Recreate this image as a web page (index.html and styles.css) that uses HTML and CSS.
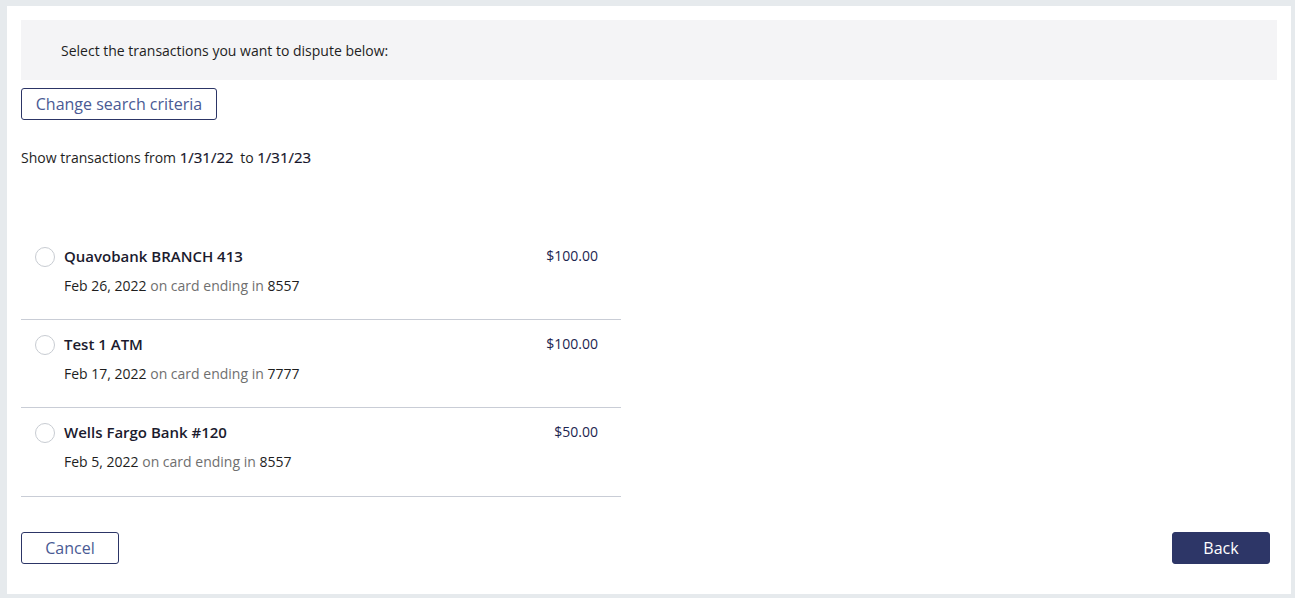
FILE: index.html
```html
<!DOCTYPE html>
<html>
<head>
<meta charset="utf-8">
<link rel="stylesheet" href="styles.css">
</head>
<body>
<div class="card">
  <div class="banner">Select the transactions you want to dispute below:</div>
  <button class="btn btn-outline btn-criteria">Change search criteria</button>
  <p class="range">Show transactions from <span class="date">1/31/22</span> to <span class="date">1/31/23</span></p>
  <ul class="txlist">
    <li class="tx">
      <span class="radio"></span>
      <div class="txbody">
        <div class="txname">Quavobank BRANCH 413</div>
        <div class="txmeta">Feb 26, 2022 <span class="muted">on card ending in</span> 8557</div>
      </div>
      <div class="amount">$100.00</div>
    </li>
    <li class="tx">
      <span class="radio"></span>
      <div class="txbody">
        <div class="txname">Test 1 ATM</div>
        <div class="txmeta">Feb 17, 2022 <span class="muted">on card ending in</span> 7777</div>
      </div>
      <div class="amount">$100.00</div>
    </li>
    <li class="tx">
      <span class="radio"></span>
      <div class="txbody">
        <div class="txname">Wells Fargo Bank #120</div>
        <div class="txmeta">Feb 5, 2022 <span class="muted">on card ending in</span> 8557</div>
      </div>
      <div class="amount">$50.00</div>
    </li>
  </ul>
  <div class="footer">
    <button class="btn btn-outline btn-small">Cancel</button>
    <button class="btn btn-primary btn-small">Back</button>
  </div>
</div>
</body>
</html>
```

FILE: styles.css
```css
html, body {
  margin: 0;
  padding: 0;
  background: #e6eaed;
  font-family: "Open Sans", "Liberation Sans", sans-serif;
  color: #1e1e1e;
}

.card {
  background: #ffffff;
  margin: 6px 4px 4px 7px;
  padding: 14px 14px 30px 14px;
  display: flex;
  flex-direction: column;
  align-items: flex-start;
}

.banner {
  align-self: stretch;
  background: #f4f4f6;
  height: 60px;
  padding-left: 40px;
  display: flex;
  align-items: center;
  font-size: 14px;
  color: #1e1e1e;
  box-sizing: border-box;
}

.btn {
  font-family: "Open Sans", "Liberation Sans", sans-serif;
  border-radius: 3px;
  height: 32px;
  box-sizing: border-box;
  cursor: pointer;
  padding: 0;
}

.btn-outline {
  background: #ffffff;
  border: 1px solid #2c3566;
  color: #4a5a94;
}

.btn-criteria {
  margin-top: 8px;
  width: 196px;
  font-size: 16px;
}

.btn-small {
  width: 98px;
  font-size: 16px;
}

.btn-primary {
  background: #2d3667;
  border: 1px solid #2d3667;
  color: #ffffff;
}

.range {
  margin: 27px 0 0 0;
  font-size: 14px;
  line-height: 20px;
  color: #1e1e1e;
}

.range .date {
  font-size: 15px;
  color: #14142a;
  margin-right: 3px;
  -webkit-text-stroke: 0.2px #14142a;
}

.txlist {
  list-style: none;
  margin: 64px 0 0 0;
  padding: 0;
  width: 600px;
}

.tx {
  display: flex;
  align-items: flex-start;
  padding: 14px 23px 23px 14px;
  border-bottom: 1px solid #c9cdd6;
}

.tx:last-child {
  padding-bottom: 24px;
}

.radio {
  width: 18px;
  height: 18px;
  border: 1px solid #c8ccd2;
  border-radius: 50%;
  flex: none;
  margin-top: 1px;
  margin-right: 9px;
}

.txbody {
  flex: 1;
  display: flex;
  flex-direction: column;
  gap: 10px;
}

.txname {
  font-size: 15px;
  font-weight: 600;
  line-height: 20px;
  color: #1b1b2e;
}

.txmeta {
  font-size: 14px;
  line-height: 20px;
  color: #1e1e1e;
}

.muted {
  color: #6f6f6f;
}

.amount {
  font-size: 14px;
  line-height: 18px;
  margin-top: 1px;
  color: #1c2550;
}

.footer {
  align-self: stretch;
  display: flex;
  justify-content: space-between;
  margin-top: 35px;
  padding-right: 7px;
}
```
